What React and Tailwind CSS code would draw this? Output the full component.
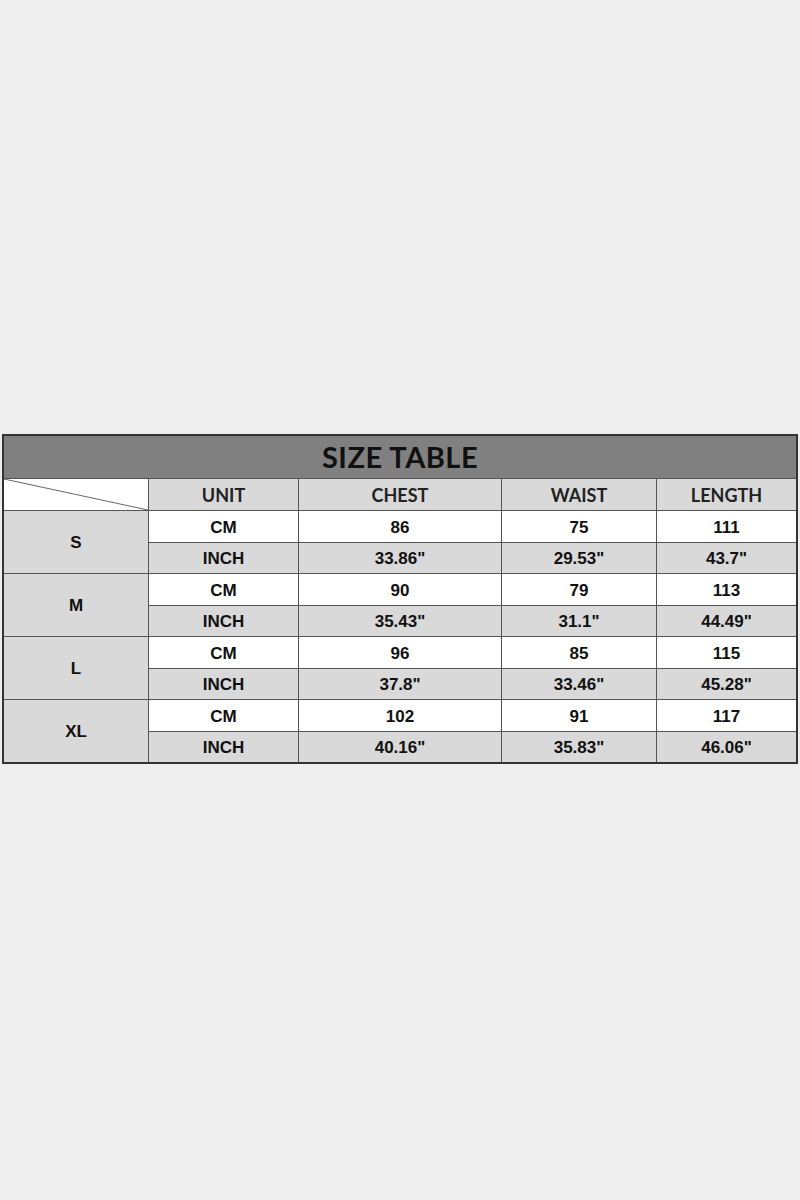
const cols = ['UNIT', 'CHEST', 'WAIST', 'LENGTH'];

const sizes = [
  { name: 'S', cm: ['86', '75', '111'], inch: ['33.86"', '29.53"', '43.7"'] },
  { name: 'M', cm: ['90', '79', '113'], inch: ['35.43"', '31.1"', '44.49"'] },
  { name: 'L', cm: ['96', '85', '115'], inch: ['37.8"', '33.46"', '45.28"'] },
  { name: 'XL', cm: ['102', '91', '117'], inch: ['40.16"', '35.83"', '46.06"'] },
];

const cell = 'flex items-center justify-center pt-[2px] text-[17px] font-bold text-[#111]';

export default function App() {
  return (
    <div className="w-[800px] h-[1200px] bg-[#eeeeee] pt-[434px] pl-[2px]">
      <div className="w-[796px] border-2 border-[#333] bg-[#555]">
        {/* titre */}
        <div className="h-[43px] bg-[#808080] flex items-center justify-center border-b border-[#555]">
          <span className="text-[29px] font-bold text-[#111] tracking-[0.5px]" style={{ fontFamily: 'Lato, sans-serif' }}>
            SIZE TABLE
          </span>
        </div>

        <div
          className="grid grid-cols-[144px_149px_202px_154px_139px] gap-[1px]"
          style={{ fontFamily: '"Liberation Sans", Arial, sans-serif' }}
        >
          {/* entête */}
          <div className="h-[31px] bg-white relative">
            <svg className="absolute inset-0" width="144" height="31" viewBox="0 0 144 31">
              <line x1="0" y1="0" x2="144" y2="31" stroke="#666" strokeWidth="1" />
            </svg>
          </div>
          {cols.map((c) => (
            <div
              key={c}
              className="h-[31px] bg-[#d9d9d9] flex items-center justify-center pt-[2px] text-[18px] font-bold text-[#222]"
              style={{ fontFamily: 'Lato, sans-serif' }}
            >
              {c}
            </div>
          ))}

          {sizes.map((s) => (
            <div key={s.name} className="contents">
              <div className={`row-span-2 bg-[#d9d9d9] ${cell}`}>{s.name}</div>
              <div className={`h-[31px] bg-white ${cell}`}>CM</div>
              {s.cm.map((v, i) => (
                <div key={'c' + i} className={`h-[31px] bg-white ${cell}`}>{v}</div>
              ))}
              <div className={`h-[30px] bg-[#d9d9d9] ${cell}`}>INCH</div>
              {s.inch.map((v, i) => (
                <div key={'i' + i} className={`h-[30px] bg-[#d9d9d9] ${cell}`}>{v}</div>
              ))}
            </div>
          ))}
        </div>
      </div>
    </div>
  );
}
